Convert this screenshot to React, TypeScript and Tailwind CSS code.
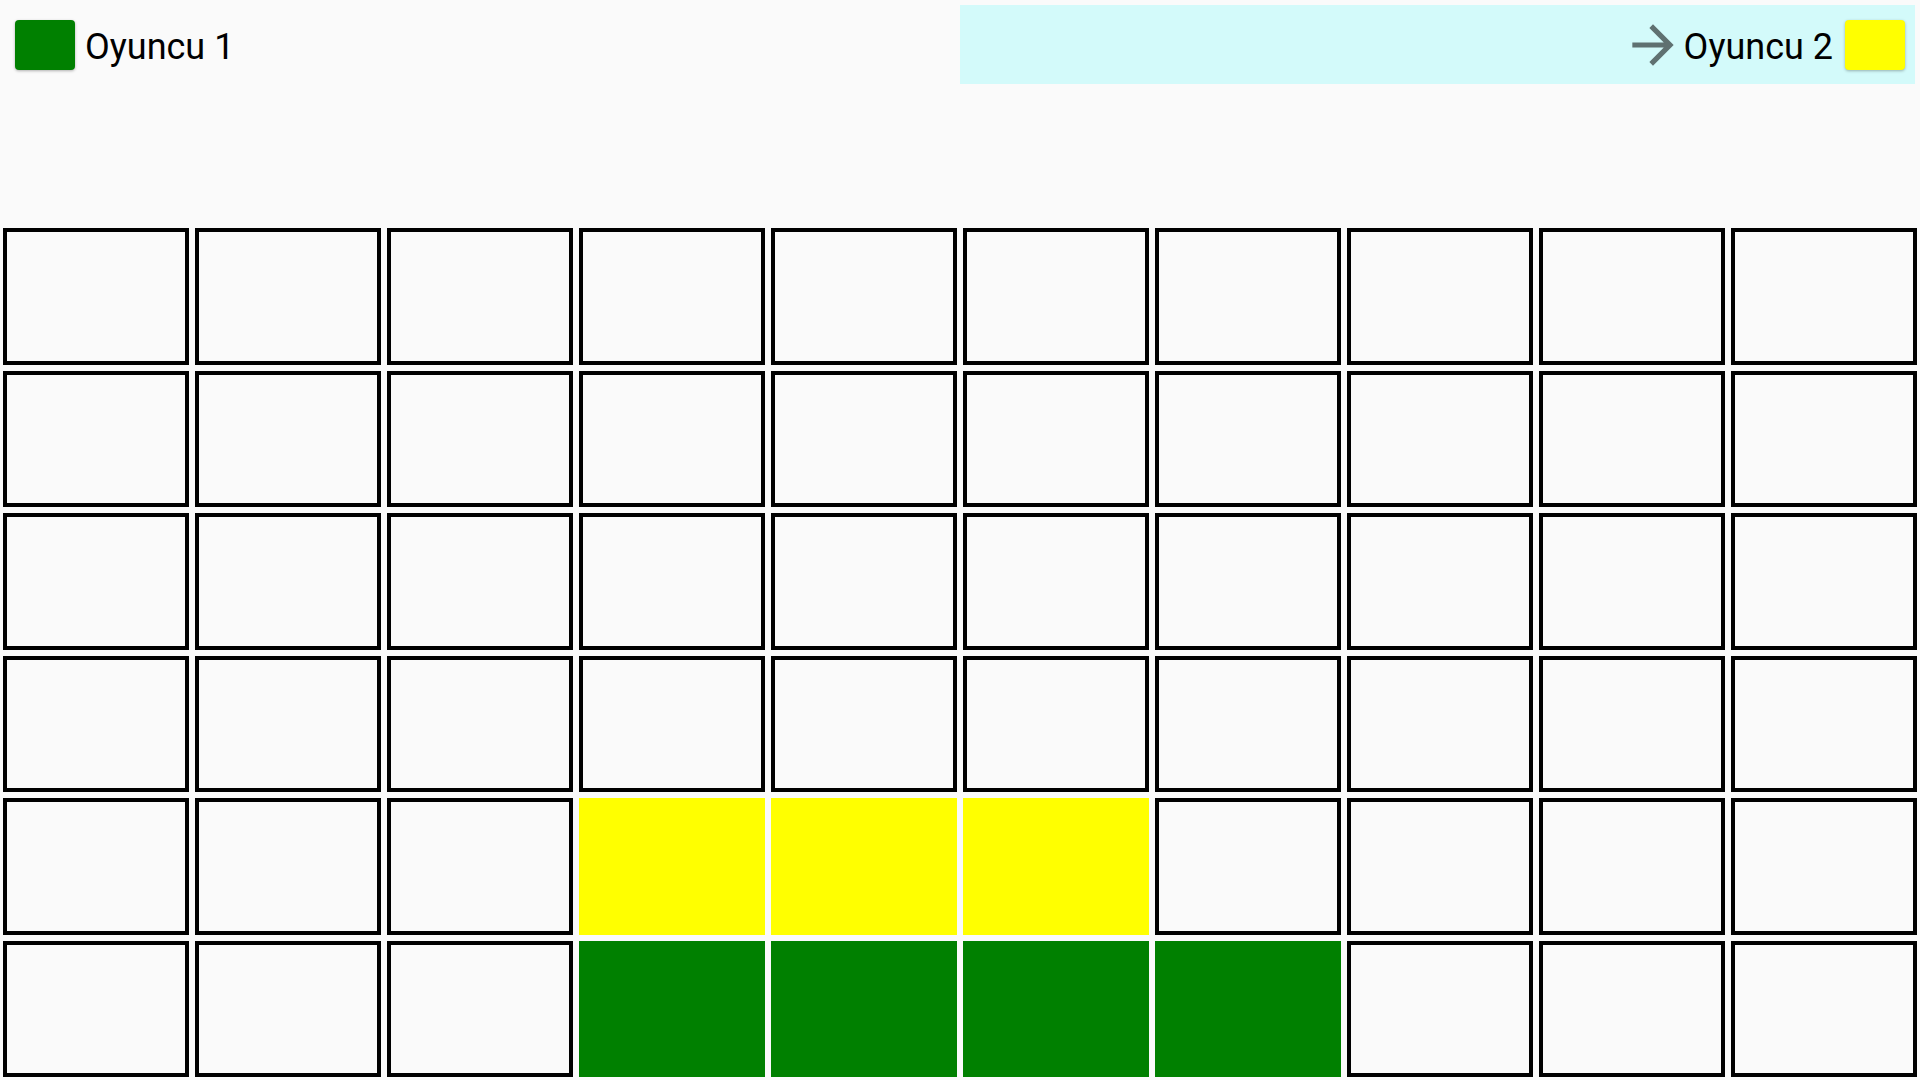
import React from "react";

const ROWS = 6;
const COLS = 10;

function cellColor(r: number, c: number): string | null {
  if (r === 4 && c >= 3 && c <= 5) return "yellow";
  if (r === 5 && c >= 3 && c <= 6) return "green";
  return null;
}

function Arrow() {
  return (
    <svg width="62" height="62" viewBox="0 0 24 24" className="shrink-0">
      <path
        d="M12 4l-1.41 1.41L16.17 11H4v2h12.17l-5.58 5.59L12 20l8-8z"
        fill="#5f7171"
      />
    </svg>
  );
}

export default function App() {
  const cells = [];
  for (let r = 0; r < ROWS; r++) {
    for (let c = 0; c < COLS; c++) {
      const col = cellColor(r, c);
      let cls = "m-[3px] border-4 border-black bg-[#fafafa]";
      if (col === "yellow") cls = "m-[3px] border-4 border-[#ffff00] bg-[#ffff00]";
      if (col === "green") cls = "m-[3px] border-4 border-[#008000] bg-[#008000]";
      cells.push(<div key={`${r}-${c}`} className={cls} />);
    }
  }
  return (
    <div
      className="w-[1920px] h-[1080px] bg-[#fafafa] flex flex-col overflow-hidden"
      style={{ fontFamily: "Roboto, 'Noto Sans', sans-serif" }}
    >
      <div className="h-[89px] flex shrink-0">
        <div className="w-1/2 flex items-center pl-[15px]">
          <div className="w-[60px] h-[50px] rounded-[4px] bg-[#008000] shadow-[0_1px_3px_rgba(0,0,0,0.3)]" />
          <span className="ml-[10px] pt-[4px] text-[36px] leading-none text-black">Oyuncu 1</span>
        </div>
        <div className="w-1/2 flex pt-[5px] pr-[5px] pb-[5px]">
          <div className="flex-1 bg-[#d3fafa] flex items-center justify-end pr-[10px]">
            <Arrow />
            <span className="ml-0 pt-[4px] text-[36px] leading-none text-black">Oyuncu 2</span>
            <div className="ml-[12px] w-[60px] h-[50px] rounded-[4px] bg-[#ffff00] shadow-[0_1px_3px_rgba(0,0,0,0.3)]" />
          </div>
        </div>
      </div>
      <div className="mt-[136px] h-[855px] grid grid-cols-10 grid-rows-6">{cells}</div>
    </div>
  );
}
